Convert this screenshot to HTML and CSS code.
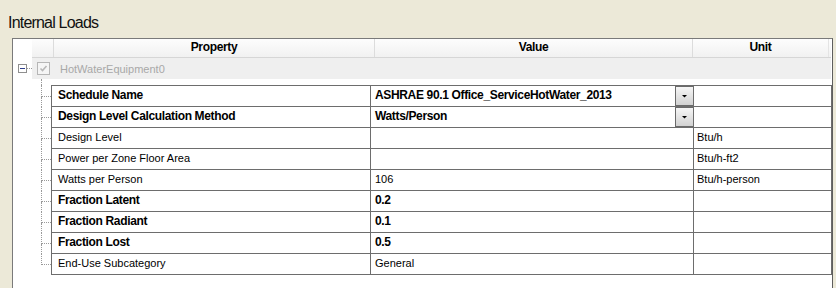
FILE: index.html
```html
<!DOCTYPE html>
<html lang="en">

<head>
    <meta charset="UTF-8">
    <title>Internal Loads</title>
    <link rel="stylesheet" href="styles.css">
</head>

<body>
    <div class="title">Internal Loads</div>

    <div class="panel">
        <div class="grid-head">
            <div class="hcell"></div>
            <div class="hcell">Property</div>
            <div class="hcell">Value</div>
            <div class="hcell">Unit</div>
        </div>

        <div class="group">
            <div class="group-tree">
                <span class="minus"></span>
                <span class="dots-h"></span>
            </div>
            <div class="group-row">
                <span class="check">
                    <svg width="11" height="11" viewBox="0 0 11 11">
                        <polyline points="2.5,5.5 4.5,7.5 8.5,3" fill="none" stroke="#b8b8b8" stroke-width="1.6"/>
                    </svg>
                </span>
                <span class="group-name">HotWaterEquipment0</span>
            </div>
        </div>

        <div class="spacer"><span class="dots-v"></span></div>

        <div class="props">
            <div class="row first">
                <div class="stub"><span class="stub-top"></span><span class="stub-bot"></span></div>
                <div class="cell prop bold">Schedule Name</div>
                <div class="cell val bold">
                    <span class="val-text">ASHRAE 90.1 Office_ServiceHotWater_2013</span>
                    <span class="drop"><i></i></span>
                </div>
                <div class="cell unit"></div>
            </div>
            <div class="row">
                <div class="stub"><span class="stub-top"></span><span class="stub-bot"></span></div>
                <div class="cell prop bold">Design Level Calculation Method</div>
                <div class="cell val bold">
                    <span class="val-text">Watts/Person</span>
                    <span class="drop"><i></i></span>
                </div>
                <div class="cell unit"></div>
            </div>
            <div class="row">
                <div class="stub"><span class="stub-top"></span><span class="stub-bot"></span></div>
                <div class="cell prop">Design Level</div>
                <div class="cell val"></div>
                <div class="cell unit">Btu/h</div>
            </div>
            <div class="row">
                <div class="stub"><span class="stub-top"></span><span class="stub-bot"></span></div>
                <div class="cell prop">Power per Zone Floor Area</div>
                <div class="cell val"></div>
                <div class="cell unit">Btu/h-ft2</div>
            </div>
            <div class="row">
                <div class="stub"><span class="stub-top"></span><span class="stub-bot"></span></div>
                <div class="cell prop">Watts per Person</div>
                <div class="cell val">106</div>
                <div class="cell unit">Btu/h-person</div>
            </div>
            <div class="row">
                <div class="stub"><span class="stub-top"></span><span class="stub-bot"></span></div>
                <div class="cell prop bold">Fraction Latent</div>
                <div class="cell val bold">0.2</div>
                <div class="cell unit"></div>
            </div>
            <div class="row">
                <div class="stub"><span class="stub-top"></span><span class="stub-bot"></span></div>
                <div class="cell prop bold">Fraction Radiant</div>
                <div class="cell val bold">0.1</div>
                <div class="cell unit"></div>
            </div>
            <div class="row">
                <div class="stub"><span class="stub-top"></span><span class="stub-bot"></span></div>
                <div class="cell prop bold">Fraction Lost</div>
                <div class="cell val bold">0.5</div>
                <div class="cell unit"></div>
            </div>
            <div class="row last">
                <div class="stub"><span class="stub-top"></span></div>
                <div class="cell prop">End-Use Subcategory</div>
                <div class="cell val">General</div>
                <div class="cell unit"></div>
            </div>
        </div>
    </div>
</body>

</html>
```

FILE: styles.css
```css
body {
    margin: 0;
    padding: 0;
    background-color: #ece9d8;
    font-family: "Liberation Sans", Arial, sans-serif;
    color: #000;
    overflow: hidden;
    height: 288px;
}

.title {
    height: 38px;
    padding: 14px 0 0 8px;
    box-sizing: border-box;
    font-size: 16px;
    letter-spacing: -0.8px;
    line-height: 18px;
    color: #111;
}

.panel {
    margin: 0 0 0 12px;
    width: 821px;
    height: 260px;
    box-sizing: border-box;
    border: 1px solid #7a7a7a;
    border-right-color: #5e5e5e;
    background-color: #fff;
}

/* column header */
.grid-head {
    margin-left: 19px;
    width: 799px;
    height: 19px;
    box-sizing: border-box;
    display: grid;
    grid-template-columns: 22px 321px 318px 138px;
    background: linear-gradient(#fdfdfd, #f1f1f1);
    border-bottom: 1px solid #d6d6d6;
}

.hcell {
    border-right: 1px solid #dcdcdc;
    font-size: 12px;
    font-weight: bold;
    letter-spacing: -0.35px;
    text-align: center;
    line-height: 17px;
}

.hcell:last-child {
    border-right: 1px solid #e4e4e4;
    margin-right: 2px;
}

/* group row */
.group {
    display: flex;
    height: 21px;
}

.group-tree {
    width: 19px;
    display: flex;
    align-items: center;
}

.minus {
    width: 9px;
    height: 9px;
    box-sizing: border-box;
    margin-left: 5px;
    border: 1px solid #8f8f8f;
    background: linear-gradient(#2d3e8c, #2d3e8c) center / 5px 1px no-repeat, #fff;
}

.dots-h {
    width: 5px;
    border-top: 1px dotted #9a9a9a;
}

.group-row {
    width: 799px;
    background-color: #efefef;
    display: flex;
    align-items: center;
}

.check {
    width: 13px;
    height: 13px;
    box-sizing: border-box;
    margin-left: 5px;
    border: 1px solid #b6b6b6;
    background-color: #f5f5f5;
}

.check svg {
    display: block;
}

.group-name {
    margin-left: 10px;
    font-size: 11px;
    color: #a8a8a8;
}

.spacer {
    height: 6px;
    padding-left: 28px;
    display: flex;
}

.dots-v {
    border-left: 1px dotted #9a9a9a;
}

/* property table */
.row {
    display: grid;
    grid-template-columns: 38px 320px 323px 138px;
    height: 21px;
}

.row.first {
    height: 22px;
}

.row.first .cell {
    border-top: 1px solid #6d6d6d;
}

.stub {
    padding-left: 28px;
    display: flex;
    flex-direction: column;
}

.stub-top {
    height: 11px;
    box-sizing: border-box;
    border-left: 1px dotted #9a9a9a;
    border-bottom: 1px dotted #9a9a9a;
}

.row.first .stub-top {
    height: 12px;
}

.stub-bot {
    flex: 1;
    border-left: 1px dotted #9a9a9a;
}

.cell {
    border-bottom: 1px solid #6d6d6d;
    border-right: 1px solid #6d6d6d;
    font-size: 11px;
    line-height: 16px;
    padding: 1px 0 0 6px;
    white-space: nowrap;
    overflow: hidden;
}

.cell.bold {
    font-size: 12px;
    font-weight: bold;
    letter-spacing: -0.35px;
}

.prop {
    border-left: 1px solid #6d6d6d;
}

.val {
    padding-left: 4px;
    display: flex;
}

.unit {
    padding-left: 3px;
}

.val-text {
    flex: 1;
}

.drop {
    width: 18px;
    height: 20px;
    margin-top: -1px;
    box-sizing: border-box;
    border: 1px solid #6a6a6a;
    border-right: none;
    background: linear-gradient(#f6f6f6, #d2d2d2);
    display: flex;
    justify-content: center;
    align-items: center;
}

.drop i {
    width: 6px;
    height: 3px;
    background-color: #000;
    clip-path: polygon(0 0, 100% 0, 50% 100%);
}
```
